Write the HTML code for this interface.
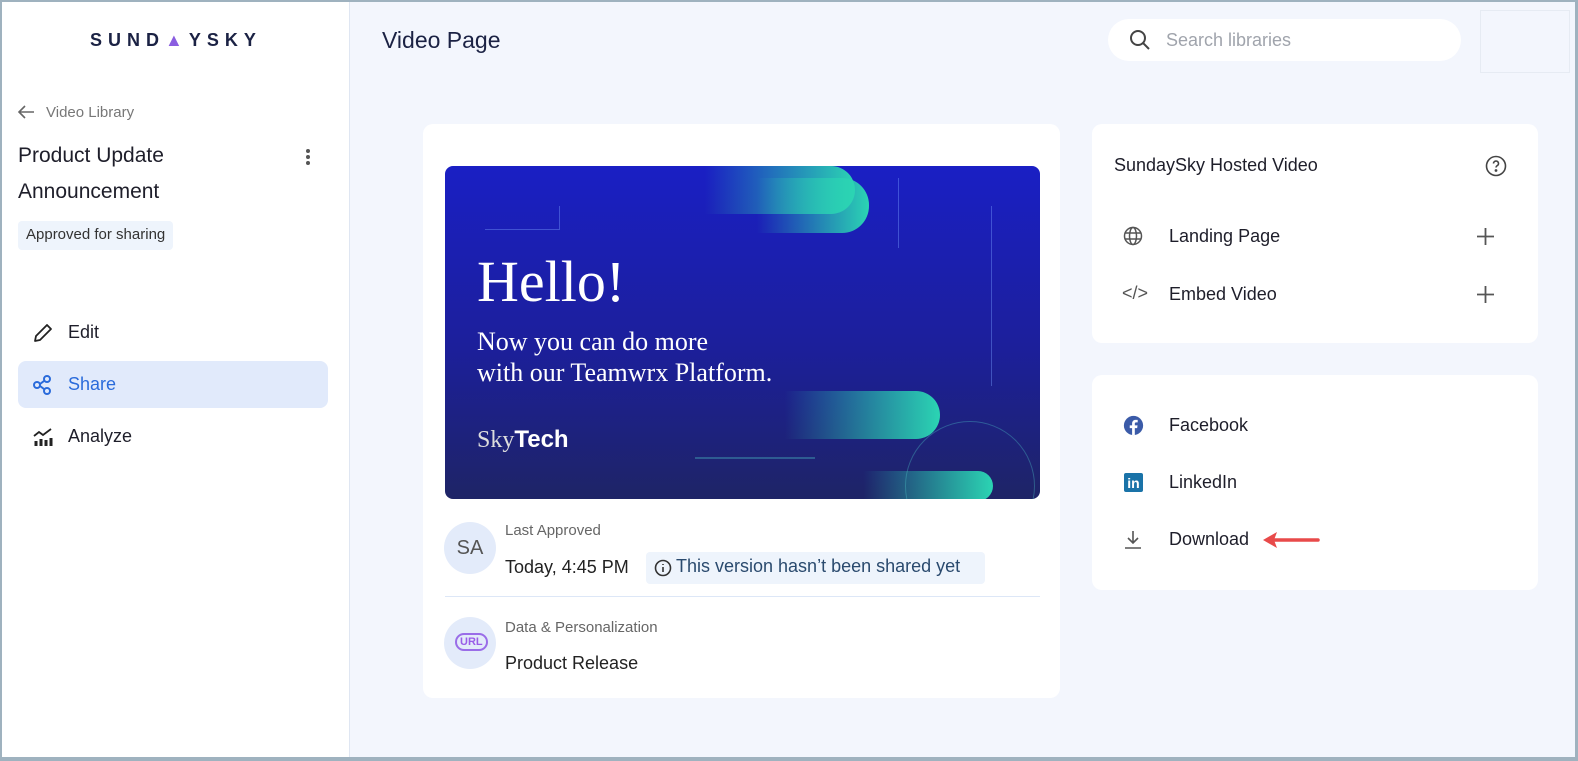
<!DOCTYPE html>
<html><head><meta charset="utf-8"><style>
*{box-sizing:border-box;margin:0;padding:0}
body{width:1578px;height:761px;overflow:hidden;font-family:"Liberation Sans",sans-serif;background:#f3f6fd;position:relative;color:#1e1e2a}
.frame{position:absolute;left:0;top:0;width:1578px;height:761px;border:2px solid #9fb2bf;border-right-width:3px;border-bottom-width:4px;pointer-events:none;z-index:10}
.side{position:absolute;left:0;top:0;width:350px;height:761px;background:#fff;border-right:1px solid #dfe6f2}
.abs{position:absolute}
.card{position:absolute;background:#fff;border-radius:10px}
.t{position:absolute;white-space:nowrap}
</style></head><body>
<div class="side">
  <div class="t" style="left:90px;top:30px;font-size:18px;font-weight:bold;letter-spacing:6px;color:#1b2244">SUND<span style="color:#8a5de0">▲</span>YSKY</div>
  <svg class="abs" style="left:16px;top:104px" width="20" height="16" viewBox="0 0 20 16"><path d="M18 8H3M9 2L3 8l6 6" fill="none" stroke="#666" stroke-width="1.6"/></svg>
  <div class="t" style="left:46px;top:104px;font-size:15px;color:#777">Video Library</div>
  <div class="t" style="left:18px;top:138px;font-size:21px;line-height:36px;color:#1e1e2a">Product Update<br>Announcement</div>
  <div class="abs" style="left:306px;top:149px;width:4px;height:4px;border-radius:2px;background:#555;box-shadow:0 6px 0 #555,0 12px 0 #555"></div>
  <div class="t" style="left:18px;top:221px;height:29px;padding:0 8px;line-height:28px;background:#eef4fc;border-radius:4px;font-size:15px;color:#333">Approved for sharing</div>
  <svg class="abs" style="left:32px;top:322px" width="22" height="22" viewBox="0 0 22 22"><path d="M3 19l1-5L15 3l4 4L8 18z" fill="none" stroke="#222" stroke-width="1.8" stroke-linejoin="round"/></svg>
  <div class="t" style="left:68px;top:322px;font-size:18px">Edit</div>
  <div class="abs" style="left:18px;top:361px;width:310px;height:47px;background:#e1eafb;border-radius:8px"></div>
  <svg class="abs" style="left:32px;top:374px" width="22" height="22" viewBox="0 0 22 22" fill="none" stroke="#2a6bdb" stroke-width="2"><circle cx="5" cy="11" r="3"/><circle cx="15" cy="5" r="3"/><circle cx="15" cy="17" r="3"/><path d="M8 10l4-3M8 12l4 3"/></svg>
  <div class="t" style="left:68px;top:374px;font-size:18px;color:#2a6bdb">Share</div>
  <svg class="abs" style="left:32px;top:426px" width="22" height="22" viewBox="0 0 22 22" fill="none" stroke="#222" stroke-width="1.8"><path d="M2 10l5-4 4 3 8-6"/><path d="M4 15v5M9 13v7M14 14v6M19 12v8" stroke-width="3"/></svg>
  <div class="t" style="left:68px;top:426px;font-size:18px">Analyze</div>
</div>
<div class="t" style="left:382px;top:27px;font-size:23px;color:#1b2244">Video Page</div>
<div class="abs" style="left:1108px;top:19px;width:353px;height:42px;background:#fff;border-radius:21px"></div>
<svg class="abs" style="left:1128px;top:28px" width="24" height="24" viewBox="0 0 24 24" fill="none" stroke="#444" stroke-width="2"><circle cx="10" cy="10" r="7"/><path d="M15 15l6 6"/></svg>
<div class="t" style="left:1166px;top:30px;font-size:18px;color:#a0a4ac">Search libraries</div>
<div class="abs" style="left:1480px;top:10px;width:90px;height:63px;border:1px solid #e6ebf3"></div>

<div class="card" style="left:423px;top:124px;width:637px;height:574px"></div>
<div class="abs" style="left:445px;top:166px;width:595px;height:333px;border-radius:8px;overflow:hidden;background:linear-gradient(180deg,#1a1fc4 0%,#1c1f9a 55%,#1e2466 100%)">
  <div class="abs" style="left:160px;top:0px;width:250px;height:48px;border-radius:0 24px 24px 0;background:linear-gradient(90deg,rgba(30,40,200,0) 40%,#2bd4b3)"></div>
  <div class="abs" style="left:200px;top:12px;width:224px;height:55px;border-radius:0 27px 27px 0;background:linear-gradient(90deg,rgba(30,40,200,0) 50%,#2bd4b3)"></div>
  <div class="abs" style="left:150px;top:225px;width:345px;height:48px;border-radius:0 24px 24px 0;background:linear-gradient(90deg,rgba(30,40,200,0) 55%,#2bd4b3)"></div>
  <div class="abs" style="left:260px;top:305px;width:288px;height:30px;border-radius:0 15px 15px 0;background:linear-gradient(90deg,rgba(30,40,200,0) 55%,#2bd4b3)"></div>
  <div class="abs" style="left:453px;top:12px;width:1px;height:70px;background:rgba(120,160,255,.4)"></div>
  <div class="abs" style="left:546px;top:40px;width:1px;height:180px;background:rgba(120,160,255,.4)"></div>
  <div class="abs" style="left:40px;top:40px;width:75px;height:24px;border-right:1px solid rgba(120,160,255,.4);border-bottom:1px solid rgba(120,160,255,.4)"></div>
  <div class="abs" style="left:250px;top:291px;width:120px;height:2px;background:rgba(80,200,200,.35)"></div>
  <div class="abs" style="left:460px;top:255px;width:130px;height:130px;border-radius:65px;border:1px solid rgba(80,200,200,.35)"></div>
  <div class="t" style="left:32px;top:82px;font-family:'Liberation Serif',serif;font-size:58px;color:#fff">Hello!</div>
  <div class="t" style="left:32px;top:160px;font-family:'Liberation Serif',serif;font-size:26px;line-height:31px;color:#fff">Now you can do more<br>with our Teamwrx Platform.</div>
  <div class="t" style="left:32px;top:260px;font-family:'Liberation Serif',serif;font-size:24px;color:#ddd">Sky<b style="font-family:'Liberation Sans',sans-serif;color:#fff">Tech</b></div>
</div>
<div class="abs" style="left:444px;top:522px;width:52px;height:52px;border-radius:26px;background:#e3ebfa;font-size:20px;color:#555;text-align:center;line-height:52px">SA</div>
<div class="t" style="left:505px;top:522px;font-size:15px;color:#666">Last Approved</div>
<div class="t" style="left:505px;top:557px;font-size:18px;color:#222">Today, 4:45 PM</div>
<div class="abs" style="left:646px;top:552px;width:339px;height:32px;background:#eef4fc;border-radius:4px"></div>
<svg class="abs" style="left:654px;top:559px" width="18" height="18" viewBox="0 0 18 18" fill="none" stroke="#333" stroke-width="1.6"><circle cx="9" cy="9" r="7.5"/><path d="M9 8v5M9 5v1"/></svg>
<div class="t" style="left:676px;top:556px;font-size:18px;color:#2a4a6e">This version hasn’t been shared yet</div>
<div class="abs" style="left:445px;top:596px;width:595px;height:1px;background:#dde7f7"></div>
<div class="abs" style="left:444px;top:617px;width:52px;height:52px;border-radius:26px;background:#e3ebfa"></div>
<div class="t" style="left:455px;top:633px;font-size:11px;font-weight:bold;color:#9a5de8;border:2px solid #9a6de8;border-radius:10px;padding:1px 3px">URL</div>
<div class="t" style="left:505px;top:619px;font-size:15px;color:#666">Data &amp; Personalization</div>
<div class="t" style="left:505px;top:653px;font-size:18px;color:#222">Product Release</div>

<div class="card" style="left:1092px;top:124px;width:446px;height:219px"></div>
<div class="t" style="left:1114px;top:155px;font-size:18px">SundaySky Hosted Video</div>
<svg class="abs" style="left:1485px;top:155px" width="22" height="22" viewBox="0 0 22 22" fill="none" stroke="#444" stroke-width="1.6"><circle cx="11" cy="11" r="9.5"/><path d="M8.5 8.5a2.5 2.5 0 1 1 3.5 2.3c-.7.4-1 .9-1 1.7"/><circle cx="11" cy="15.5" r=".6" fill="#444"/></svg>
<svg class="abs" style="left:1123px;top:226px" width="20" height="20" viewBox="0 0 20 20" fill="none" stroke="#555" stroke-width="1.5"><circle cx="10" cy="10" r="8.5"/><ellipse cx="10" cy="10" rx="3.5" ry="8.5"/><path d="M2 7h16M2 13h16"/></svg>
<div class="t" style="left:1169px;top:226px;font-size:18px">Landing Page</div>
<svg class="abs" style="left:1476px;top:227px" width="19" height="19" viewBox="0 0 19 19" stroke="#555" stroke-width="1.8"><path d="M9.5 1v17M1 9.5h17"/></svg>
<div class="t" style="left:1122px;top:283px;font-size:18px;color:#555">&lt;/&gt;</div>
<div class="t" style="left:1169px;top:284px;font-size:18px">Embed Video</div>
<svg class="abs" style="left:1476px;top:285px" width="19" height="19" viewBox="0 0 19 19" stroke="#555" stroke-width="1.8"><path d="M9.5 1v17M1 9.5h17"/></svg>

<div class="card" style="left:1092px;top:375px;width:446px;height:215px"></div>
<svg class="abs" style="left:1123px;top:415px" width="21" height="21" viewBox="0 0 24 24"><circle cx="12" cy="12" r="11" fill="#3b5ba8"/><path d="M13.5 23v-8h2.7l.4-3.2h-3.1V9.9c0-.9.3-1.5 1.6-1.5h1.7V5.6c-.3 0-1.3-.1-2.4-.1-2.4 0-4 1.5-4 4.1v2.2H7.7V15h2.7v8z" fill="#fff"/></svg>
<div class="t" style="left:1169px;top:415px;font-size:18px">Facebook</div>
<div class="abs" style="left:1124px;top:473px;width:19px;height:19px;background:#1a73a8;border-radius:2px;color:#fff;font-weight:bold;font-size:14px;line-height:20px;text-align:center">in</div>
<div class="t" style="left:1169px;top:472px;font-size:18px">LinkedIn</div>
<svg class="abs" style="left:1124px;top:530px" width="18" height="20" viewBox="0 0 18 20" fill="none" stroke="#555" stroke-width="1.6"><path d="M9 1v12M4 8l5 5 5-5M1 18h16"/></svg>
<div class="t" style="left:1169px;top:529px;font-size:18px">Download</div>
<svg class="abs" style="left:1262px;top:531px" width="58" height="18" viewBox="0 0 58 18"><path d="M56 9H10" stroke="#e84a4a" stroke-width="3.5" stroke-linecap="round"/><path d="M1 9l14-8-3 8 3 8z" fill="#e84a4a"/></svg>
<div class="frame"></div>
</body></html>
